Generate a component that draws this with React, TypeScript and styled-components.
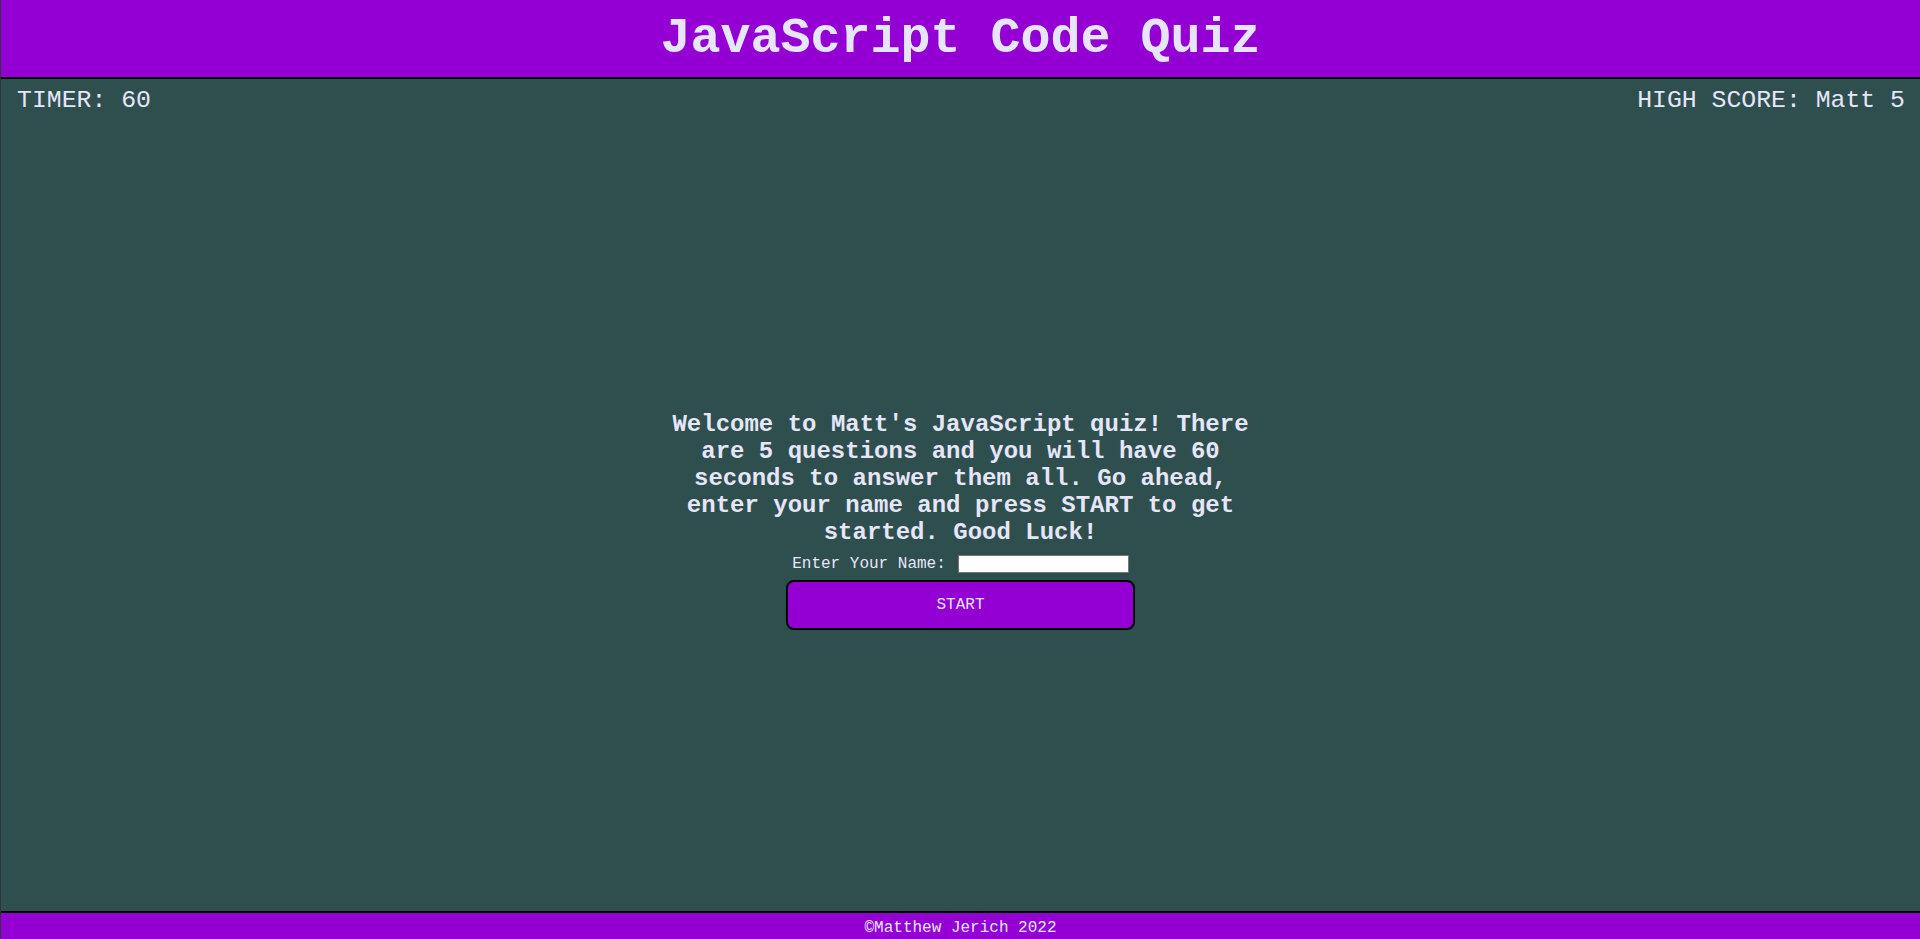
import styled, { createGlobalStyle } from "styled-components"

const GlobalStyle = createGlobalStyle`
  html, body {
    margin: 0;
    padding: 0;
    height: 100%;
  }
  #root {
    height: 100%;
  }
  body {
    background-color: #2f4f4f;
    color: #e6e6fa;
    font-family: "Courier New", "Liberation Mono", monospace;
  }
`

export default function App() {
  return (
    <>
      <GlobalStyle />
      <Page>
        <Header>
          <Title>JavaScript Code Quiz</Title>
        </Header>
        <Main>
          <StatsRow>
            <Stat>TIMER: 60</Stat>
            <Stat>HIGH SCORE: Matt 5</Stat>
          </StatsRow>
          <Quiz>
            <Intro>
              Welcome to Matt's JavaScript quiz! There are 5 questions and you will have 60
              seconds to answer them all. Go ahead, enter your name and press START to get
              started. Good Luck!
            </Intro>
            <NameRow>
              <label htmlFor="name">Enter Your Name:</label>
              <NameInput id="name" type="text" />
            </NameRow>
            <StartButton>START</StartButton>
          </Quiz>
        </Main>
        <Footer>©Matthew Jerich 2022</Footer>
      </Page>
    </>
  )
}

const Page = styled.div`
  display: flex;
  flex-direction: column;
  height: 100%;
  border-left: 1px solid #2b3440;
  box-sizing: border-box;
`

const Header = styled.header`
  display: flex;
  align-items: center;
  justify-content: center;
  height: 77px;
  background-color: #9400d3;
  border-bottom: 2px solid #000;
  flex-shrink: 0;
`

const Title = styled.h1`
  margin: 0;
  font-size: 50px;
  font-weight: bold;
  color: #e6e6fa;
`

const Main = styled.main`
  flex: 1;
  display: flex;
  flex-direction: column;
`

const StatsRow = styled.div`
  display: flex;
  justify-content: space-between;
  padding: 7px 15px 0 16px;
`

const Stat = styled.span`
  font-size: 24.8px;
`

const Quiz = styled.section`
  display: flex;
  flex-direction: column;
  align-items: center;
  margin-top: 297px;
`

const Intro = styled.p`
  width: 600px;
  margin: 0;
  font-size: 24px;
  font-weight: bold;
  text-align: center;
`

const NameRow = styled.div`
  display: flex;
  align-items: center;
  gap: 12px;
  margin-top: 9px;
  font-size: 16px;
  height: 18px;
`

const NameInput = styled.input`
  width: 171px;
  height: 18px;
  box-sizing: border-box;
  border: 1px solid #767676;
  background: #fff;
  padding: 0 2px;
  margin: 0;
  outline: none;
`

const StartButton = styled.button`
  width: 349px;
  height: 50px;
  margin-top: 7px;
  box-sizing: border-box;
  background-color: #9400d3;
  border: 2px solid #000;
  border-radius: 8px;
  color: #e6e6fa;
  font-family: "Courier New", "Liberation Mono", monospace;
  font-size: 16px;
  cursor: pointer;
`

const Footer = styled.footer`
  flex-shrink: 0;
  box-sizing: border-box;
  height: 28px;
  padding-top: 6px;
  background-color: #9400d3;
  border-top: 2px solid #000;
  text-align: center;
  font-size: 16px;
  line-height: 18px;
`
